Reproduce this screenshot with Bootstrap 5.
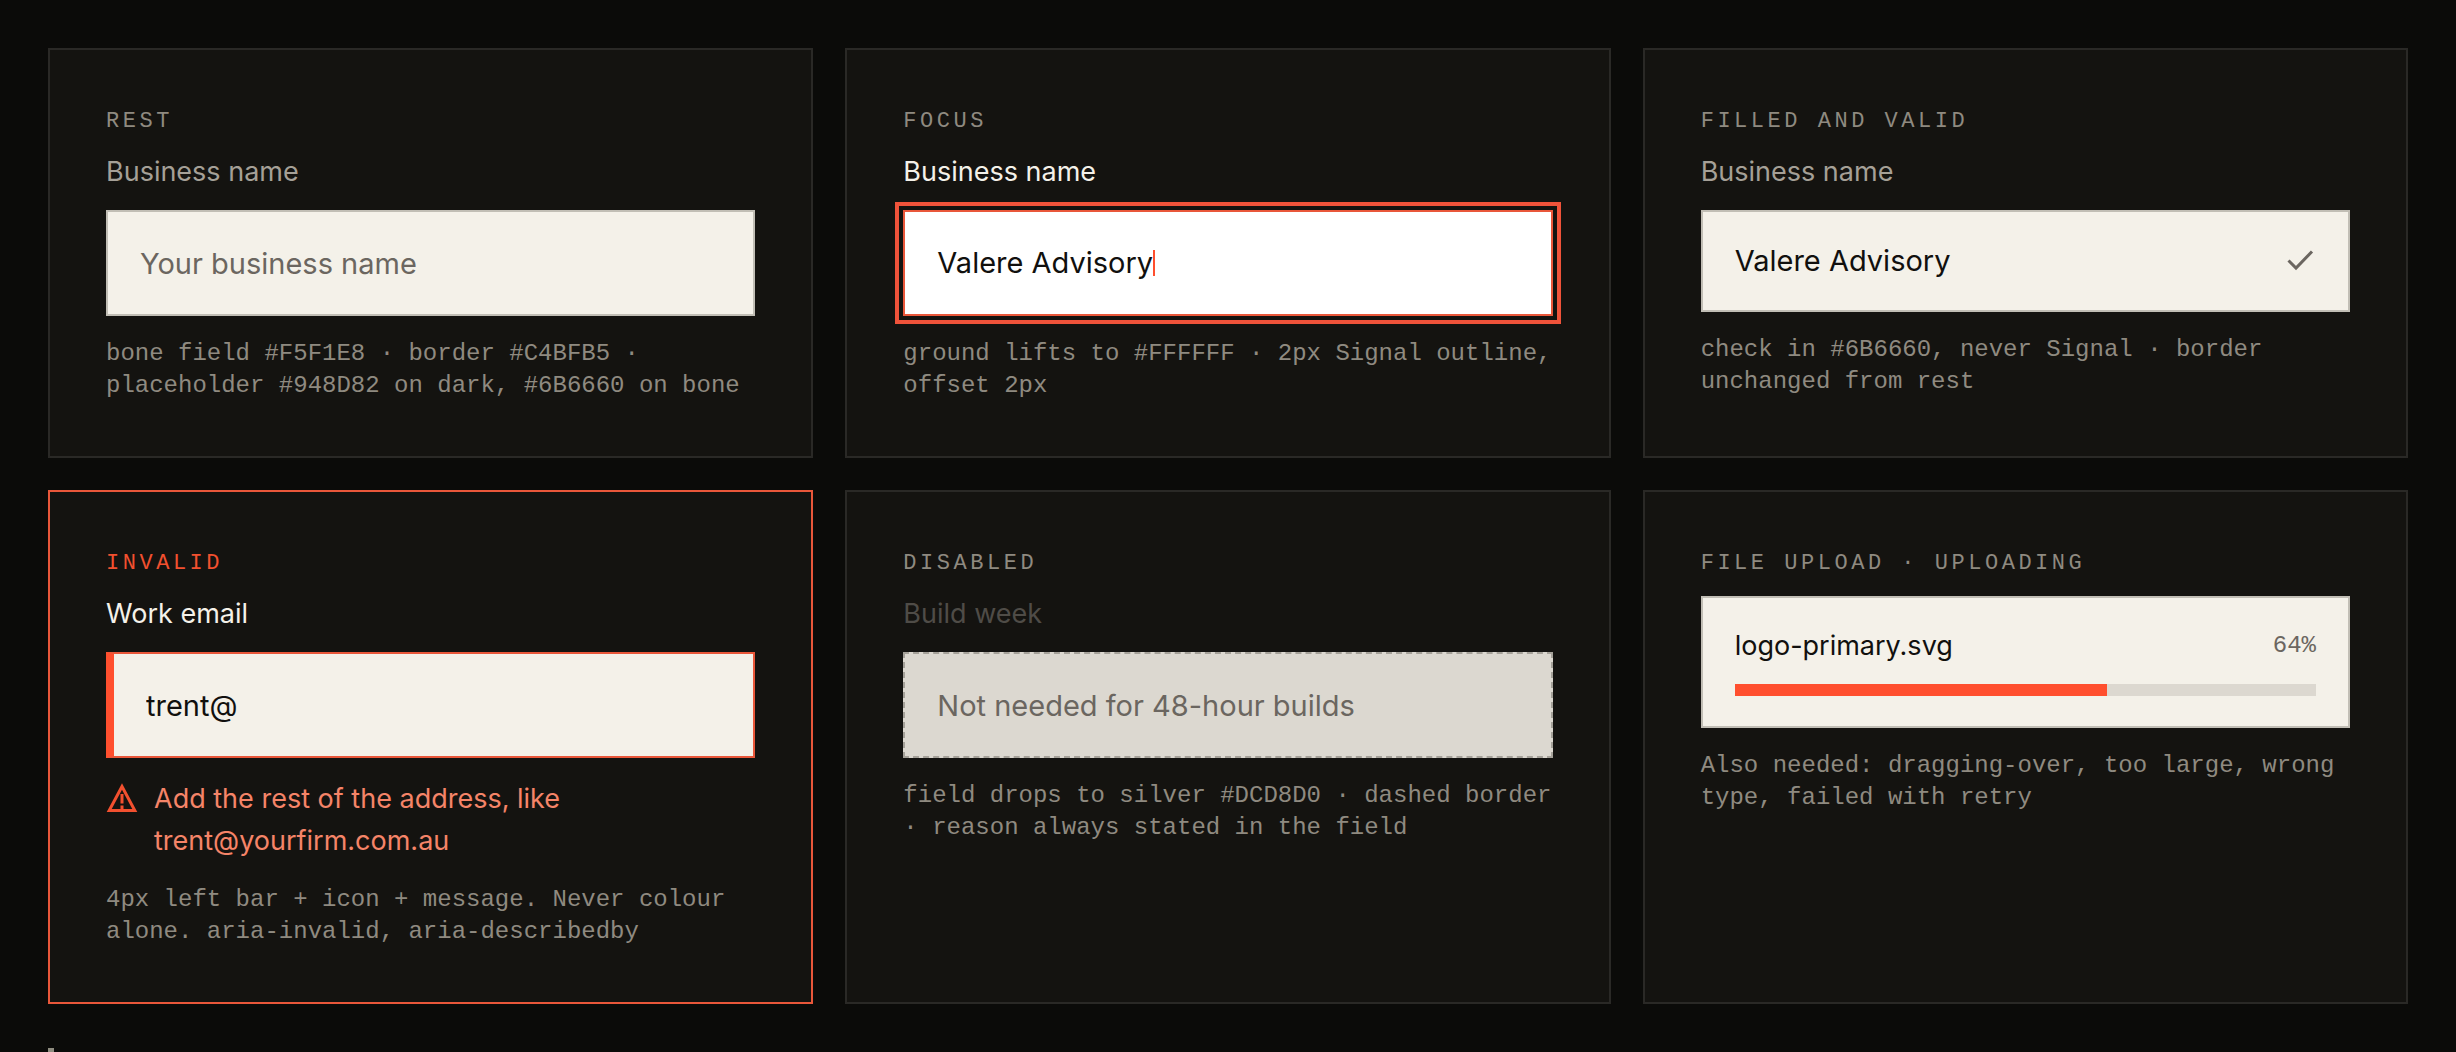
<!DOCTYPE html>
<html lang="en">
<head>
<meta charset="utf-8">
<meta name="viewport" content="width=device-width, initial-scale=1">
<title>Field states</title>
<link href="https://cdn.jsdelivr.net/npm/bootstrap@5.3.0/dist/css/bootstrap.min.css" rel="stylesheet">
<style>
  :root {
    --ink: #0b0b09; --panel: #141310; --line: #2a2926; --bone: #f4f1e9;
    --edge: #c1beb5; --muted: #8f8a80; --stone: #6b6660; --signal: #ff4f2e;
  }
  body { background: var(--ink); color: var(--bone); font-family: Inter, "Liberation Sans", sans-serif; font-size: 27px; }
  .board { padding: 48px 48px 0; gap: 44px; }
  .states { --bs-gutter-x: 32px; --bs-gutter-y: 32px; }
  .state { background: var(--panel); border: 2px solid var(--line); padding: 56px 56px 54px; }
  .state-invalid { border-color: #e9573a; }
  .state-name { font: 22px/32px "Liberation Mono", monospace; letter-spacing: .16em; text-transform: uppercase; color: var(--muted); margin: 0 0 16px; }
  .state-invalid .state-name { color: #f2502f; }
  .field-label { display: block; line-height: 36px; margin: 0 0 20px; color: #a5a097; }
  .label-strong { color: var(--bone); }
  .label-off { color: #4f4c47; }
  .field { height: 106px; padding: 0 32px; border: 2px solid var(--edge); border-radius: 0; background: var(--bone); color: #11100e; font-size: 29px; line-height: 40px; }
  .field:focus { background: #fff; color: #11100e; box-shadow: none; }
  .field::placeholder { color: var(--stone); opacity: 1; }
  .field-focus { background: #fff; border-color: #e9573a; outline: 4px solid #f0533a; outline-offset: 4px; }
  .field-valid { height: 102px; }
  .field-invalid { border-color: #e9573a; border-left: 8px solid var(--signal); }
  .field:disabled { background: #dcd8d0; border: 2px dashed #a5a199; }
  .bare { border: 0; padding: 0; background: transparent; color: inherit; outline: 0; min-width: 0; }
  .bare-typing { width: 216px; }
  .caret { width: 2px; height: 26px; background: var(--signal); }
  .note { font: 24px/32px "Liberation Mono", monospace; color: var(--muted); margin: 22px 0 0; }
  .problem { margin-top: 20px; gap: 16px; line-height: 42px; color: #f58468; }
  .upload { background: var(--bone); border: 2px solid var(--edge); padding: 30px 32px; color: #11100e; }
  .upload-row { line-height: 36px; margin-bottom: 20px; }
  .percent { font: 24px/32px "Liberation Mono", monospace; color: var(--stone); }
  .progress { height: 12px; border-radius: 0; background: #dcd8d0; }
  .progress-bar { background: var(--signal); }
  .glyph { width: 32px; height: 32px; fill: none; stroke-width: 3; }
  .aside-rule { border-left: 6px solid #8f8d80; }
</style>
</head>
<body>
<main class="board vh-100 overflow-hidden d-flex flex-column">
  <div class="row row-cols-3 states">
    <div class="col">
      <section class="state h-100">
        <h2 class="state-name">Rest</h2>
        <label class="field-label" for="f-rest">Business name</label>
        <input class="form-control field" id="f-rest" type="text" placeholder="Your business name">
        <p class="note">bone field #F5F1E8 · border #C4BFB5 · placeholder #948D82 on dark, #6B6660 on bone</p>
      </section>
    </div>
    <div class="col">
      <section class="state h-100">
        <h2 class="state-name">Focus</h2>
        <label class="field-label label-strong" for="f-focus">Business name</label>
        <div class="field field-focus d-flex align-items-center">
          <input class="bare bare-typing" id="f-focus" type="text" value="Valere Advisory">
          <span class="caret"></span>
        </div>
        <p class="note">ground lifts to #FFFFFF · 2px Signal outline, offset 2px</p>
      </section>
    </div>
    <div class="col">
      <section class="state h-100">
        <h2 class="state-name">Filled and valid</h2>
        <label class="field-label" for="f-valid">Business name</label>
        <div class="field field-valid d-flex align-items-center">
          <input class="bare flex-grow-1" id="f-valid" type="text" value="Valere Advisory">
          <svg class="glyph" viewBox="0 0 32 32" stroke="#6b6660" stroke-width="3" aria-hidden="true"><path d="M4.500 15.500L12 23L28 6.500"/></svg>
        </div>
        <p class="note">check in #6B6660, never Signal · border unchanged from rest</p>
      </section>
    </div>
    <div class="col">
      <section class="state state-invalid h-100">
        <h2 class="state-name">Invalid</h2>
        <label class="field-label label-strong" for="f-invalid">Work email</label>
        <input class="form-control field field-invalid" id="f-invalid" type="text" value="trent@" aria-invalid="true" aria-describedby="f-problem">
        <div class="problem d-flex" id="f-problem">
          <svg class="glyph flex-shrink-0 mt-1" viewBox="0 0 32 32" stroke="#f2502f" aria-hidden="true"><path d="M16 4.500L28.800 28.500H3.200Z"/><path d="M16 12V21.500M16 23.500V27"/></svg>
          <span>Add the rest of the address, like<br>trent@yourfirm.com.au</span>
        </div>
        <p class="note">4px left bar + icon + message. Never colour alone. aria-invalid, aria-describedby</p>
      </section>
    </div>
    <div class="col">
      <section class="state h-100">
        <h2 class="state-name">Disabled</h2>
        <label class="field-label label-off" for="f-off">Build week</label>
        <input class="form-control field" id="f-off" type="text" placeholder="Not needed for 48-hour builds" disabled>
        <p class="note">field drops to silver #DCD8D0 · dashed border · reason always stated in the field</p>
      </section>
    </div>
    <div class="col">
      <section class="state h-100">
        <h2 class="state-name">File upload · uploading</h2>
        <div class="upload">
          <div class="upload-row d-flex justify-content-between align-items-center">
            <span>logo-primary.svg</span>
            <span class="percent">64%</span>
          </div>
          <div class="progress" role="progressbar" aria-label="Upload progress" aria-valuenow="64" aria-valuemin="0" aria-valuemax="100">
            <div class="progress-bar" style="width: 64%"></div>
          </div>
        </div>
        <p class="note">Also needed: dragging-over, too large, wrong type, failed with retry</p>
      </section>
    </div>
  </div>
  <aside class="aside-rule flex-grow-1"></aside>
</main>
<script src="https://cdn.jsdelivr.net/npm/bootstrap@5.3.0/dist/js/bootstrap.bundle.min.js"></script>
</body>
</html>
